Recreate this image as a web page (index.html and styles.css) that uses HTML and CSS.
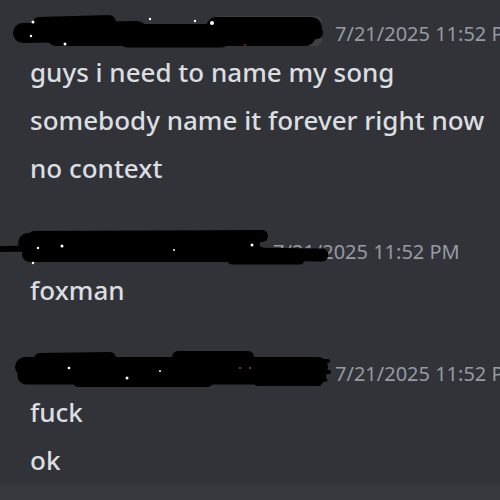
FILE: index.html
```html
<!DOCTYPE html>
<html>
<head>
<meta charset="utf-8">
<link rel="stylesheet" href="styles.css">
</head>
<body>
<div class="chat">
  <div class="message first">
    <div class="header">
      <svg class="redact r1" width="305" height="34" viewBox="0 0 305 34">
        <rect x="196" y="2" width="109" height="30" rx="6" fill="#3d3f45"/>
        <g stroke="#000" stroke-linecap="round" fill="none">
          <path d="M6 19 L120 17" stroke-width="20"/>
          <path d="M22 10 L92 8" stroke-width="14"/>
          <path d="M40 21 L288 21" stroke-width="22"/>
          <path d="M110 27 L205 27" stroke-width="13"/>
          <path d="M200 14 L294 14" stroke-width="22"/>
          <path d="M280 20 L300 19" stroke-width="12"/>
        </g>
        <g fill="#fff">
          <circle cx="16" cy="8" r="1.5"/>
          <circle cx="48" cy="30" r="1.5"/>
          <circle cx="133" cy="5" r="1.2"/>
          <circle cx="178" cy="7" r="1.2"/>
          <circle cx="195" cy="9" r="2"/>
          <circle cx="14" cy="22" r="1.2"/>
        </g>
        <circle cx="228" cy="31" r="1.5" fill="#5a1c1c"/>
      </svg>
      <span class="time">7/21/2025 11:52 PM</span>
    </div>
    <div class="line">guys i need to name my song</div>
    <div class="line">somebody name it forever right now</div>
    <div class="line">no context</div>
  </div>

  <div class="message">
    <div class="header">
      <svg class="redact r2" width="330" height="40" viewBox="0 0 330 40">
        <g stroke="#000" stroke-linecap="round" fill="none">
          <path d="M2 21 L62 20" stroke-width="6"/>
          <path d="M28 15 L250 15" stroke-width="20"/>
          <path d="M34 9 L262 8" stroke-width="12"/>
          <path d="M30 26 L258 26" stroke-width="16"/>
          <path d="M236 26 L322 27" stroke-width="13"/>
          <path d="M232 32 L300 32" stroke-width="9"/>
        </g>
        <g fill="#fff">
          <circle cx="38" cy="20" r="1.2"/>
          <circle cx="62" cy="18" r="1.5"/>
          <circle cx="174" cy="22" r="1"/>
          <circle cx="252" cy="17" r="1.5"/>
          <circle cx="33" cy="35" r="1.2"/>
        </g>
      </svg>
      <span class="time">7/21/2025 11:52 PM</span>
    </div>
    <div class="line">foxman</div>
  </div>

  <div class="message">
    <div class="header">
      <svg class="redact r3" width="312" height="40" viewBox="0 0 312 40">
        <g stroke="#000" stroke-linecap="round" fill="none">
          <path d="M7 17 L300 17" stroke-width="20"/>
          <path d="M8 26 L300 26" stroke-width="17"/>
          <path d="M60 32 L190 32" stroke-width="10"/>
          <path d="M22 9 L92 8" stroke-width="12"/>
          <path d="M160 7 L230 7" stroke-width="12"/>
          <path d="M240 32 L300 32" stroke-width="8"/>
          <path d="M292 11 L310 11" stroke-width="4"/>
          <path d="M292 22 L311 22" stroke-width="4"/>
          <path d="M292 30 L308 30" stroke-width="3"/>
        </g>
        <g fill="#fff">
          <circle cx="51" cy="18" r="1.3"/>
          <circle cx="109" cy="28" r="1.5"/>
          <circle cx="142" cy="21" r="1"/>
        </g>
        <g fill="#d23a3a">
          <circle cx="222" cy="18" r="0.9"/>
          <circle cx="232" cy="18" r="0.9"/>
        </g>
      </svg>
      <span class="time">7/21/2025 11:52 PM</span>
    </div>
    <div class="line">fuck</div>
    <div class="line">ok</div>
  </div>
</div>
<div class="composer"></div>
</body>
</html>
```

FILE: styles.css
```css
html, body {
  margin: 0;
  padding: 0;
  background: #313338;
  width: 500px;
  height: 500px;
  overflow: hidden;
}

body {
  font-family: "Noto Sans", "Open Sans", sans-serif;
}

.chat {
  padding: 14px 0 0 30px;
  height: 470px;
  overflow: hidden;
}

.message {
  margin-top: 40px;
}

.message.first {
  margin-top: 0;
}

.header {
  display: flex;
  align-items: flex-start;
  height: 34px;
  white-space: nowrap;
}

.redact {
  flex: none;
  display: block;
  overflow: visible;
  position: relative;
  z-index: 1;
}

.r1 {
  margin-left: -13px;
  margin-right: 13px;
}

.r2 {
  margin-left: -30px;
  margin-top: -4px;
  margin-right: -57px;
}

.r3 {
  margin-left: -12px;
  margin-top: -4px;
  margin-right: 5px;
}

.time {
  font-size: 20px;
  line-height: 40px;
  color: #949ba4;
}

.line {
  font-size: 26px;
  font-weight: 500;
  line-height: 48px;
  color: #dbdee1;
  white-space: nowrap;
}

.composer {
  height: 16px;
  background: #37383e;
}
```
